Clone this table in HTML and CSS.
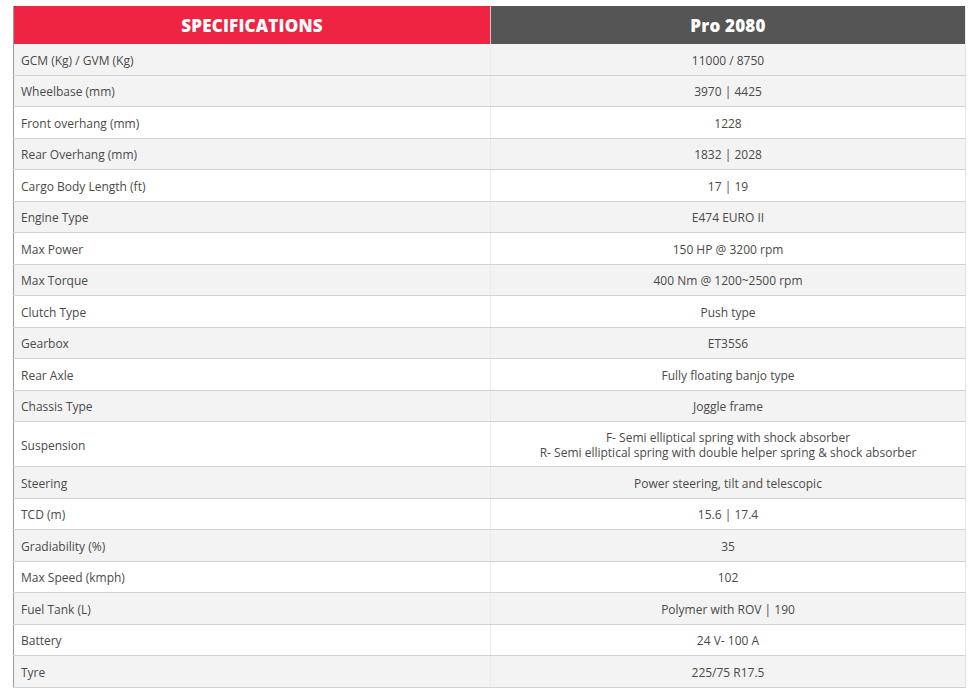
FILE: index.html
```html
<!DOCTYPE html>
<html>
<head>
<meta charset="utf-8">
<link rel="stylesheet" href="styles.css">
</head>
<body>
<table class="spec">
  <thead>
    <tr>
      <th class="h-red">SPECIFICATIONS</th>
      <th class="h-dark">Pro 2080</th>
    </tr>
  </thead>
  <tbody>
    <tr class="g"><td>GCM (Kg) / GVM (Kg)</td><td>11000 / 8750</td></tr>
    <tr class="g"><td>Wheelbase (mm)</td><td>3970 | 4425</td></tr>
    <tr class="w"><td>Front overhang (mm)</td><td>1228</td></tr>
    <tr class="g"><td>Rear Overhang (mm)</td><td>1832 | 2028</td></tr>
    <tr class="w"><td>Cargo Body Length (ft)</td><td>17 | 19</td></tr>
    <tr class="g"><td>Engine Type</td><td>E474 EURO II</td></tr>
    <tr class="w"><td>Max Power</td><td>150 HP @ 3200 rpm</td></tr>
    <tr class="g"><td>Max Torque</td><td>400 Nm @ 1200~2500 rpm</td></tr>
    <tr class="w"><td>Clutch Type</td><td>Push type</td></tr>
    <tr class="g"><td>Gearbox</td><td>ET35S6</td></tr>
    <tr class="w"><td>Rear Axle</td><td>Fully floating banjo type</td></tr>
    <tr class="g"><td>Chassis Type</td><td>Joggle frame</td></tr>
    <tr class="w tall"><td>Suspension</td><td><span class="line">F- Semi elliptical spring with shock absorber</span><span class="line">R- Semi elliptical spring with double helper spring &amp; shock absorber</span></td></tr>
    <tr class="g"><td>Steering</td><td>Power steering, tilt and telescopic</td></tr>
    <tr class="w"><td>TCD (m)</td><td>15.6 | 17.4</td></tr>
    <tr class="g"><td>Gradiability (%)</td><td>35</td></tr>
    <tr class="w"><td>Max Speed (kmph)</td><td>102</td></tr>
    <tr class="g"><td>Fuel Tank (L)</td><td>Polymer with ROV | 190</td></tr>
    <tr class="w"><td>Battery</td><td>24 V- 100 A</td></tr>
    <tr class="g"><td>Tyre</td><td>225/75 R17.5</td></tr>
  </tbody>
</table>
</body>
</html>
```
FILE: styles.css
```css
html, body {
  margin: 0;
  padding: 0;
  background: #ffffff;
}
body {
  padding: 6px 14px 0 13px;
  font-family: "Open Sans", "Liberation Sans", sans-serif;
}
.spec {
  width: 953px;
  border-collapse: collapse;
  table-layout: fixed;
  border-left: 1px solid #9a9a9a;
  border-right: 1px solid #e6e6e6;
}
.spec th {
  height: 38px;
  padding: 0;
  color: #ffffff;
  font-family: "Open Sans", sans-serif;
  font-weight: 800;
  font-size: 17px;
  letter-spacing: 0.2px;
  text-align: center;
  vertical-align: middle;
}
.h-red {
  width: 476px;
  background: #ee2442;
  border-right: 1px solid #c9c9c9;
}
.h-dark {
  background: #555555;
}
.spec td {
  height: 28.5px;
  padding: 2px 0 0 0;
  font-size: 12px;
  line-height: 15px;
  color: #4a4a4a;
  border-bottom: 1px solid #d2d2d2;
  vertical-align: middle;
}
.spec td:first-child {
  padding-left: 7px;
  border-right: 1px solid #ebebeb;
}
.spec td:last-child {
  text-align: center;
}
.spec .line {
  display: block;
  line-height: 15px;
}
.spec tr.g td { background: #f3f3f3; }
.spec tr.w td { background: #ffffff; }
.spec tr.tall td { height: 42px; }
```
